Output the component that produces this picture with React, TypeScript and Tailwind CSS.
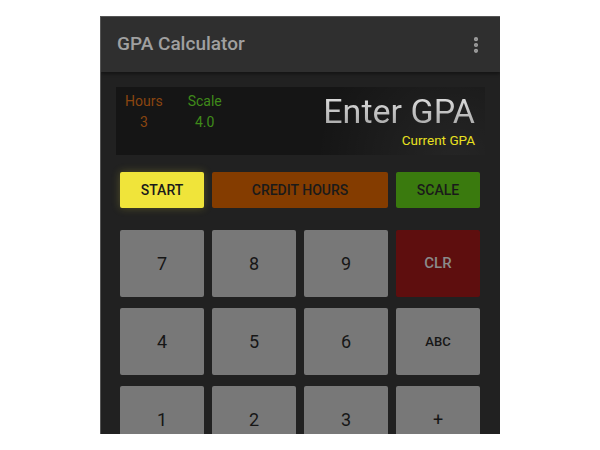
import { EllipsisVertical } from "lucide-react";

const keys: { label: string; tone?: "clr" | "small" }[] = [
  { label: "7" },
  { label: "8" },
  { label: "9" },
  { label: "CLR", tone: "clr" },
  { label: "4" },
  { label: "5" },
  { label: "6" },
  { label: "ABC", tone: "small" },
  { label: "1" },
  { label: "2" },
  { label: "3" },
  { label: "+" },
];

export default function App() {
  return (
    <div className="flex h-[450px] w-[600px] justify-center bg-white pt-4 font-['Roboto',sans-serif]">
      <div className="flex h-[418px] w-[400px] flex-col overflow-hidden border-t border-l border-[#555] bg-[#212121]">
        {/* toolbar */}
        <div className="flex h-[55px] shrink-0 items-center justify-between bg-[#2f2f2f] pl-[16px] pr-[14px] shadow-[0_2px_3px_rgba(0,0,0,0.4)]">
          <span className="text-[19px] font-medium text-[#a0a0a0]">GPA Calculator</span>
          <EllipsisVertical size={20} strokeWidth={3} className="text-[#a0a0a0]" />
        </div>

        {/* display */}
        <div className="mx-[15px] mt-[15px] flex h-[68px] shrink-0 justify-between bg-[#151515] bg-[radial-gradient(circle_at_92%_110%,rgba(255,255,255,0.07),transparent_40%)] pl-[9px] pr-[10px] pt-[6px]">
          <div className="flex gap-[25px] text-[14px] leading-[17px]">
            <div className="flex flex-col items-center gap-[4px] text-[#8a4510]">
              <span>Hours</span>
              <span>3</span>
            </div>
            <div className="flex flex-col items-center gap-[4px] text-[#3f8a1a]">
              <span>Scale</span>
              <span>4.0</span>
            </div>
          </div>
          <div className="flex flex-col items-end">
            <span className="-mt-[1px] bg-gradient-to-b from-[#e4e4e4] to-[#a4a4a4] bg-clip-text text-[34px] leading-[38px] text-transparent">
              Enter GPA
            </span>
            <span className="text-[13.5px] text-[#e8e020]">Current GPA</span>
          </div>
        </div>

        {/* mode buttons */}
        <div className="ml-[19px] mr-[20px] mt-[17px] flex h-[36px] shrink-0 gap-[8px] text-[14px] font-medium text-[#1a1a1a]">
          <div className="flex w-[84px] items-center justify-center rounded-[2px] bg-[#f0e43a] shadow-[0_0_8px_rgba(240,228,58,0.25)]">
            START
          </div>
          <div className="flex flex-1 items-center justify-center rounded-[2px] bg-[#843c00]">
            CREDIT HOURS
          </div>
          <div className="flex w-[84px] items-center justify-center rounded-[2px] bg-[#3a7a0e]">
            SCALE
          </div>
        </div>

        {/* keypad */}
        <div className="ml-[19px] mr-[20px] mt-[22px] grid grid-cols-4 gap-x-[8px] gap-y-[11px]">
          {keys.map((k) => (
            <div
              key={k.label}
              className={
                "flex h-[67px] items-center justify-center rounded-[2px] " +
                (k.tone === "clr"
                  ? "bg-[#5e0e0e] text-[15px] font-medium text-[#8a8a8a]"
                  : k.tone === "small"
                    ? "bg-[#787878] text-[13px] font-medium text-[#161616]"
                    : "bg-[#787878] text-[18px] text-[#161616]")
              }
            >
              {k.label}
            </div>
          ))}
        </div>
      </div>
    </div>
  );
}
